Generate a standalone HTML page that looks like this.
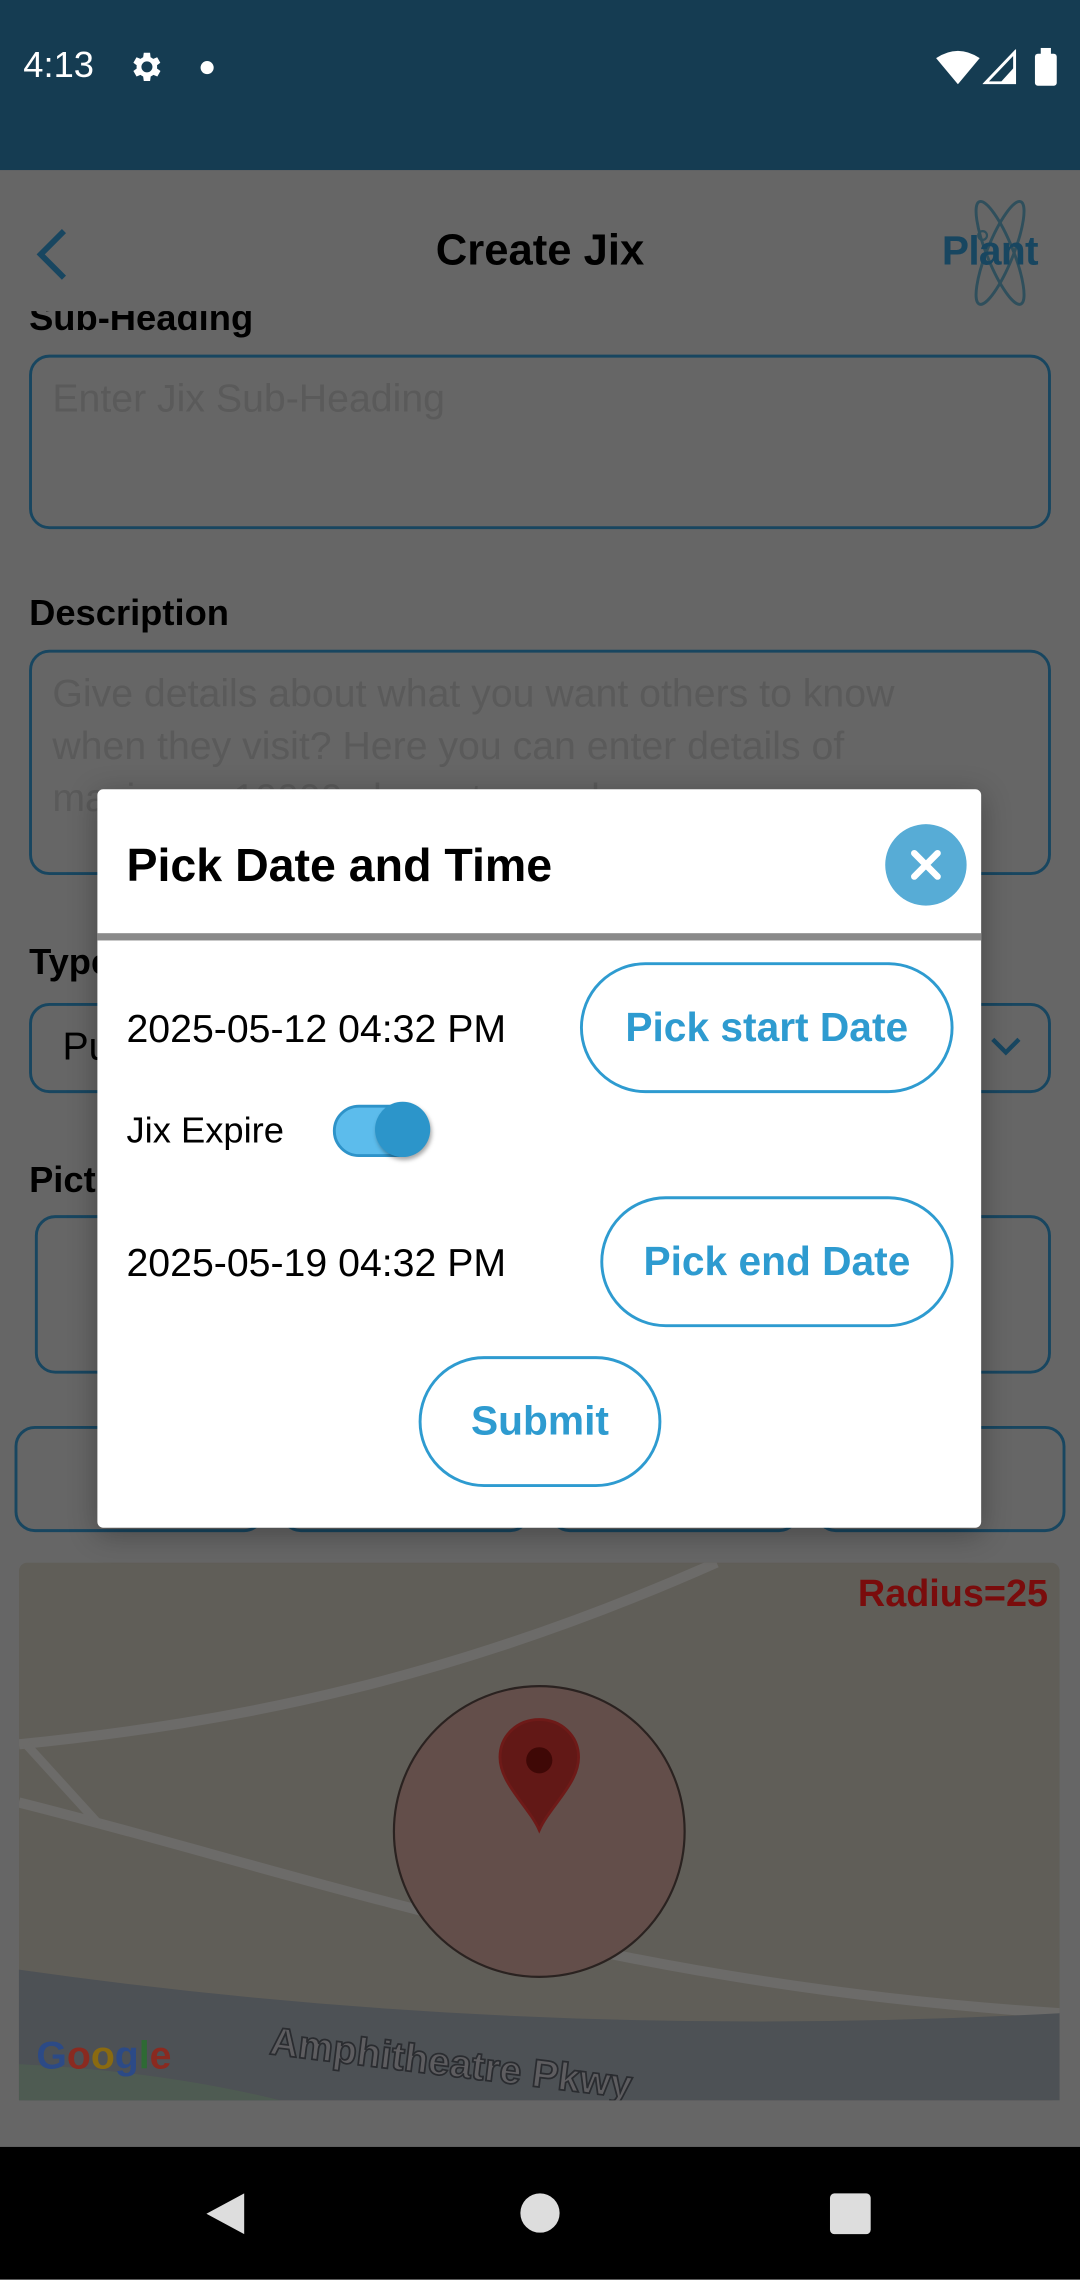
<!DOCTYPE html>
<html><head><meta charset="utf-8">
<style>
html,body{margin:0;padding:0;width:1080px;height:2280px;overflow:hidden;background:#666;}
#s{position:absolute;left:0;top:0;width:743px;height:1568px;transform:scale(1.45357);transform-origin:0 0;font-family:"Liberation Sans",sans-serif;background:#666;overflow:hidden;}
.a{position:absolute;}
.box{position:absolute;border:2px solid #184660;border-radius:14px;box-sizing:border-box;}
.lbl{position:absolute;font-weight:bold;font-size:25px;color:#000;}
.ph{position:absolute;color:#5a5a5a;font-size:27px;line-height:36px;}
.btn{position:absolute;border:2px solid #2e9bd0;border-radius:46px;box-sizing:border-box;color:#2e9bd0;font-weight:bold;font-size:28px;display:flex;align-items:center;justify-content:center;}
.dt{position:absolute;font-size:27px;color:#000;}
</style></head><body>
<div id="s">
<div class="lbl" style="left:20px;top:205px;">Sub-Heading</div>
<div class="box" style="left:20px;top:244px;width:703px;height:120px;"></div>
<div class="ph" style="left:36px;top:256px;">Enter Jix Sub-Heading</div>

<div class="lbl" style="left:20px;top:408px;">Description</div>
<div class="a" style="left:20px;top:447px;width:703px;height:155px;overflow:hidden;border-radius:14px;">
<div class="ph" style="left:16px;top:12px;width:648px;">Give details about what you want others to know when they visit? Here you can enter details of maximum 10000 characters only</div>
</div>
<div class="box" style="left:20px;top:447px;width:703px;height:155px;"></div>

<div class="lbl" style="left:20px;top:648px;">Type</div>
<div class="box" style="left:20px;top:690px;width:703px;height:62px;"></div>
<div class="a" style="left:43px;top:705px;font-size:27px;color:#000;">Public</div>
<svg class="a" style="left:680px;top:712px" width="24" height="16" viewBox="0 0 24 16"><path d="M3 3l9 9 9-9" fill="none" stroke="#184660" stroke-width="3"/></svg>

<div class="lbl" style="left:20px;top:798px;">Picture</div>
<div class="box" style="left:24px;top:836px;width:699px;height:109px;"></div>

<div class="box" style="left:10px;top:981px;width:172px;height:73px;"></div>
<div class="box" style="left:193px;top:981px;width:172px;height:73px;"></div>
<div class="box" style="left:378px;top:981px;width:172px;height:73px;"></div>
<div class="box" style="left:561px;top:981px;width:172px;height:73px;"></div>

<div class="a" style="left:0;top:117px;width:743px;height:97px;background:#666;"></div>
<div class="a" style="left:0;top:0;width:743px;height:117px;background:#153c52;"></div>
<div class="a" style="left:16px;top:31px;color:#fff;font-size:25px;">4:13</div>
<svg class="a" style="left:87px;top:33px" width="26" height="26" viewBox="0 0 24 24"><path fill="#fff" d="M19.4 13a7.5 7.5 0 0 0 0-2l2.1-1.6-2-3.5-2.5 1a7 7 0 0 0-1.7-1L15 3h-4l-.4 2.9a7 7 0 0 0-1.7 1l-2.5-1-2 3.5L6.5 11a7.5 7.5 0 0 0 0 2l-2.1 1.6 2 3.5 2.5-1a7 7 0 0 0 1.7 1L11 21h4l.4-2.9a7 7 0 0 0 1.7-1l2.5 1 2-3.5zM13 15.5a3.5 3.5 0 1 1 0-7 3.5 3.5 0 0 1 0 7z"/></svg>
<div class="a" style="left:138px;top:42px;width:9px;height:9px;border-radius:50%;background:#fff;"></div>
<svg class="a" style="left:644px;top:34px" width="30" height="24" viewBox="0 0 30 24"><path fill="#fff" d="M0 6Q15-4 30 6L15 24z"/></svg>
<svg class="a" style="left:676px;top:34px" width="24" height="24" viewBox="0 0 24 24"><path fill="none" stroke="#fff" stroke-width="2" d="M22 2V23H2z"/><path fill="#fff" d="M22 12V23H12z"/></svg>
<div class="a" style="left:712px;top:37px;width:15px;height:22px;background:#fff;border-radius:2px;"></div>
<div class="a" style="left:716px;top:33px;width:7px;height:5px;background:#fff;"></div>

<svg class="a" style="left:22px;top:155px" width="26" height="40" viewBox="0 0 26 40"><path d="M22 4L6 20l16 16" fill="none" stroke="#184660" stroke-width="4"/></svg>
<div class="a" style="left:0;width:743px;top:156px;text-align:center;font-weight:bold;font-size:30px;color:#000;">Create Jix</div>
<svg class="a" style="left:660px;top:134px" width="66" height="80" viewBox="0 0 66 80"><ellipse cx="28" cy="40" rx="9" ry="38" transform="rotate(-22 28 40)" fill="none" stroke="#2f4f5c" stroke-width="2"/><ellipse cx="28" cy="40" rx="9" ry="38" transform="rotate(22 28 40)" fill="none" stroke="#2f4f5c" stroke-width="2"/><circle cx="16" cy="28" r="3" fill="none" stroke="#2f4f5c" stroke-width="1.5"/></svg>
<div class="a" style="left:648px;top:157px;font-weight:bold;font-size:28px;color:#184660;letter-spacing:-0.5px;">Plant</div>

<svg class="a" style="left:13px;top:1075px" width="716" height="370" viewBox="0 0 716 370">
<rect width="716" height="370" rx="6" fill="#605e58"/>
<path d="M0 125C150 110 300 80 480 0" stroke="#6c6b69" stroke-width="7" fill="none"/>
<path d="M0 165C200 215 400 290 716 310" stroke="#6c6b69" stroke-width="7" fill="none"/>
<path d="M5 125L55 180" stroke="#6c6b69" stroke-width="6" fill="none"/>
<path d="M0 280Q350 330 716 310V370H0z" fill="#4d5155"/>
<path d="M0 345Q100 350 180 370H0z" fill="#4e5b52"/>
<circle cx="358" cy="185" r="100" fill="#634e4a" stroke="#2a2220" stroke-width="1.5"/>
<path d="M358 108c-15 0-27 11-27 26 0 18 20 34 27 50 7-16 27-32 27-50 0-15-12-26-27-26z" fill="#621816" stroke="#6e1a18" stroke-width="2"/>
<circle cx="358" cy="136" r="9" fill="#3f0806"/>
<text x="12" y="348" font-family="Liberation Sans" font-size="27" font-weight="bold" fill="#2c4a86">G<tspan fill="#8a2a20">o</tspan><tspan fill="#8a6a10">o</tspan><tspan fill="#2c4a86">g</tspan><tspan fill="#2e6a34">l</tspan><tspan fill="#8a2a20">e</tspan></text>
<text x="172" y="338" transform="rotate(7 172 338)" font-family="Liberation Sans" font-size="27" font-weight="bold" fill="#5e5d60" stroke="#2a2c30" stroke-width="1.2">Amphitheatre Pkwy</text>
</svg>
<div class="a" style="right:22px;top:1081px;font-weight:bold;font-size:26px;color:#7a0c0c;">Radius=25</div>

<div class="a" style="left:0;top:1477px;width:743px;height:91px;background:#000;"></div>
<svg class="a" style="left:140px;top:1507px" width="30" height="32" viewBox="0 0 30 32"><path d="M28 2V30L2 16z" fill="#ddd"/></svg>
<div class="a" style="left:358px;top:1509px;width:27px;height:27px;border-radius:50%;background:#ddd;"></div>
<div class="a" style="left:571px;top:1509px;width:28px;height:28px;border-radius:3px;background:#ddd;"></div>

<div class="a" style="left:67px;top:543px;width:608px;height:508px;background:#fff;border-radius:4px;box-shadow:0 4px 20px rgba(0,0,0,0.3);"></div>
<div class="a" style="left:87px;top:577px;font-weight:bold;font-size:32px;color:#000;">Pick Date and Time</div>
<div class="a" style="left:609px;top:567px;width:56px;height:56px;border-radius:50%;background:#57acd6;"></div>
<svg class="a" style="left:624px;top:582px" width="26" height="26" viewBox="0 0 26 26"><path d="M5 5L21 21M21 5L5 21" stroke="#fff" stroke-width="4.5" stroke-linecap="round"/></svg>
<div class="a" style="left:67px;top:642px;width:608px;height:5px;background:#8a8a8a;"></div>

<div class="dt" style="left:87px;top:693px;">2025-05-12 04:32 PM</div>
<div class="btn" style="left:399px;top:662px;width:257px;height:90px;">Pick start Date</div>
<div class="a" style="left:87px;top:764px;font-size:25px;color:#000;">Jix Expire</div>
<div class="a" style="left:229px;top:760px;width:64px;height:36px;border-radius:18px;background:#5cbcec;border:2px solid #2e93c9;box-sizing:border-box;"></div>
<div class="a" style="left:258px;top:758px;width:38px;height:38px;border-radius:50%;background:#2c95ca;box-shadow:1px 2px 3px rgba(0,0,0,0.35);"></div>
<div class="dt" style="left:87px;top:854px;">2025-05-19 04:32 PM</div>
<div class="btn" style="left:413px;top:823px;width:243px;height:90px;">Pick end Date</div>
<div class="btn" style="left:288px;top:933px;width:167px;height:90px;">Submit</div>
</div>
</body></html>
